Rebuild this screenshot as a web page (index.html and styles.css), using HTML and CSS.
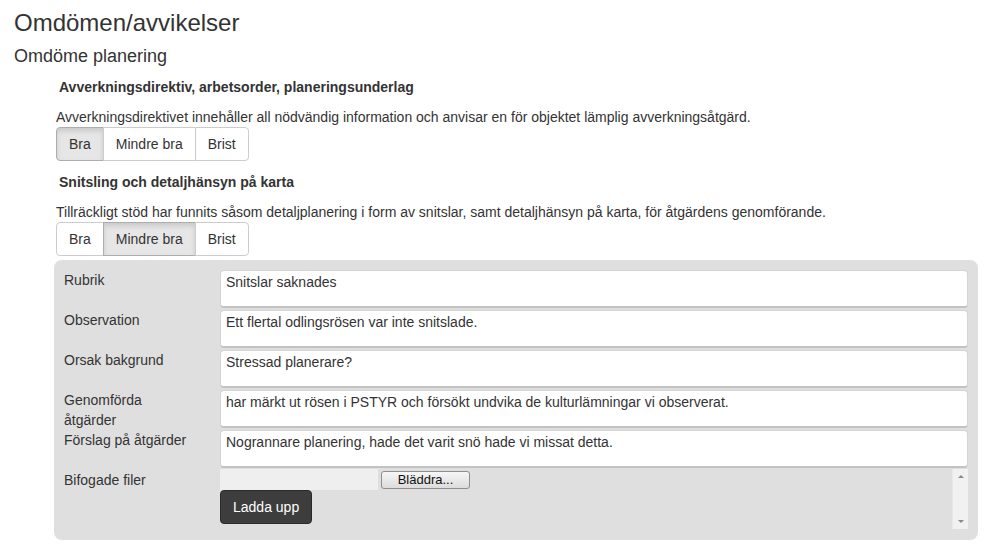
FILE: index.html
```html
<!DOCTYPE html>
<html lang="sv">
<head>
<meta charset="utf-8">
<title>Omdömen/avvikelser</title>
<link rel="stylesheet" href="styles.css">
</head>
<body>
<h1 class="title">Omdömen/avvikelser</h1>
<h2 class="subtitle">Omdöme planering</h2>
<div class="section">
  <h3 class="q-head">Avverkningsdirektiv, arbetsorder, planeringsunderlag</h3>
  <p class="q-desc">Avverkningsdirektivet innehåller all nödvändig information och anvisar en för objektet lämplig avverkningsåtgärd.</p>
  <div class="btn-group">
    <button class="btn active">Bra</button><button class="btn">Mindre bra</button><button class="btn">Brist</button>
  </div>

  <h3 class="q-head">Snitsling och detaljhänsyn på karta</h3>
  <p class="q-desc">Tillräckligt stöd har funnits såsom detaljplanering i form av snitslar, samt detaljhänsyn på karta, för åtgärdens genomförande.</p>
  <div class="btn-group">
    <button class="btn">Bra</button><button class="btn active">Mindre bra</button><button class="btn">Brist</button>
  </div>

  <div class="panel">
    <div class="row"><div class="lbl">Rubrik</div><div class="field">Snitslar saknades</div></div>
    <div class="row"><div class="lbl">Observation</div><div class="field">Ett flertal odlingsrösen var inte snitslade.</div></div>
    <div class="row"><div class="lbl">Orsak bakgrund</div><div class="field">Stressad planerare?</div></div>
    <div class="row"><div class="lbl">Genomförda åtgärder</div><div class="field">har märkt ut rösen i PSTYR och försökt undvika de kulturlämningar vi observerat.</div></div>
    <div class="row"><div class="lbl">Förslag på åtgärder</div><div class="field">Nogrannare planering, hade det varit snö hade vi missat detta.</div></div>
    <div class="row file-row">
      <div class="lbl">Bifogade filer</div>
      <div class="scrollbox">
        <div class="scroll-content">
          <div class="file-input"><span class="file-path"></span><span class="browse">Bläddra...</span></div>
          <button class="btn-dark">Ladda upp</button>
        </div>
        <div class="scrollbar">
          <span class="arrow-up"></span>
          <span class="arrow-down"></span>
        </div>
      </div>
    </div>
  </div>
</div>
</body>
</html>
```
FILE: styles.css
```css
* { box-sizing: border-box; }
html, body { margin: 0; padding: 0; background: #fff; }
body {
  font-family: "Liberation Sans", Arial, sans-serif;
  font-size: 14px;
  line-height: 20px;
  color: #333;
  padding-left: 14px;
  width: 991px;
}
.title {
  font-size: 24px;
  font-weight: normal;
  line-height: 26px;
  margin: 10px 0 0 0;
}
.subtitle {
  font-size: 18px;
  font-weight: normal;
  line-height: 20px;
  margin: 10px 0 0 0;
}
.section {
  margin-left: 42px;
}
.q-head {
  font-size: 14px;
  font-weight: bold;
  line-height: 20px;
  margin: 11px 0 0 0;
  padding-left: 3px;
}
.q-desc {
  margin: 10px 0 0 0;
}
.btn-group {
  display: flex;
}
.btn {
  font-family: "Liberation Sans", Arial, sans-serif;
  font-size: 14px;
  line-height: 20px;
  color: #333;
  background: #fff;
  border: 1px solid #ccc;
  padding: 6px 12px;
  margin: 0 0 0 -1px;
  border-radius: 0;
}
.btn:first-child { margin-left: 0; border-radius: 4px 0 0 4px; }
.btn:last-child { border-radius: 0 4px 4px 0; }
.btn.active {
  background: #e6e6e6;
  border-color: #adadad;
  box-shadow: inset 0 3px 5px rgba(0,0,0,0.125);
}
.panel {
  margin: 4px 0 0 -2px;
  width: 924px;
  background: #e0dfdf;
  border-radius: 8px;
  padding: 10px 10px 11px 10px;
}
.row {
  display: grid;
  grid-template-columns: 130px 1fr;
  column-gap: 26px;
  height: 40px;
}
.lbl {
  line-height: 20px;
  color: #333;
}
.field {
  height: 38px;
  background: #fff;
  border: 1px solid #d4d4d4;
  border-bottom: 2px solid #c2c2c2;
  border-radius: 4px;
  padding: 1px 5px;
  line-height: 20px;
  color: #333;
}
.file-row {
  height: auto;
}
.scrollbox {
  display: flex;
  height: 60px;
  margin-top: -1px;
}
.scroll-content {
  flex: 1;
}
.file-input {
  display: flex;
  align-items: center;
  height: 21px;
}
.file-path {
  width: 158px;
  height: 21px;
  background: #efefef;
}
.browse {
  margin-left: 3px;
  width: 89px;
  height: 18px;
  border: 1px solid #8e8e8e;
  border-radius: 3px;
  background: linear-gradient(#f6f6f6, #dcdcdc);
  font-size: 13px;
  line-height: 16px;
  text-align: center;
  color: #111;
}
.btn-dark {
  font-family: "Liberation Sans", Arial, sans-serif;
  font-size: 14px;
  line-height: 20px;
  color: #fff;
  background: #3d3d3d;
  border: 1px solid #2a2a2a;
  border-radius: 4px;
  padding: 6px 12px;
  margin: 0;
  height: 34px;
  white-space: nowrap;
}
.scrollbar {
  width: 16px;
  height: 60px;
  background: #f1f1f1;
  border-left: 1px solid #e8e8e8;
  display: flex;
  flex-direction: column;
  justify-content: space-between;
  align-items: center;
  padding: 6px 0 6px 0;
}
.arrow-up {
  width: 0; height: 0;
  border-left: 3px solid transparent;
  border-right: 3px solid transparent;
  border-bottom: 3px solid #8a8a8a;
}
.arrow-down {
  width: 0; height: 0;
  border-left: 3px solid transparent;
  border-right: 3px solid transparent;
  border-top: 3px solid #8a8a8a;
}
```
